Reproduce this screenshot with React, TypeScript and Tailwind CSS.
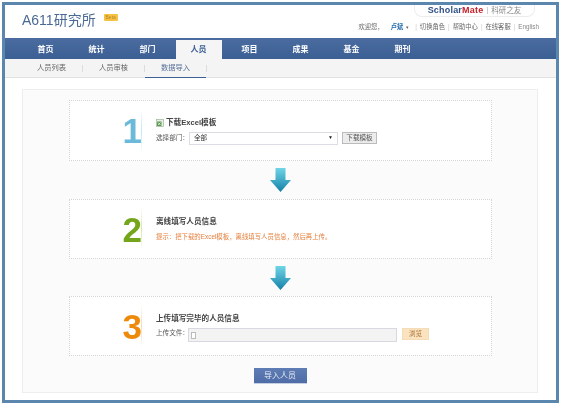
const cjk = "font-['Liberation_Sans','Noto_Sans_CJK_SC',sans-serif]";

const navItems = ['首页', '统计', '部门', '人员', '项目', '成果', '基金', '期刊'];
const subItems = ['人员列表', '人员审核', '数据导入'];

function Arrow({ id }: { id: string }) {
  return (
    <svg width="21" height="24" viewBox="0 0 21 24" className="block">
      <defs>
        <linearGradient id={id} x1="0" y1="0" x2="0" y2="1">
          <stop offset="0" stopColor="#6fd5e6" />
          <stop offset="1" stopColor="#1580a8" />
        </linearGradient>
      </defs>
      <path d="M5.5 0H15.5V12H21L10.5 24L0 12H5.5Z" fill={`url(#${id})`} />
    </svg>
  );
}

function ExcelIcon() {
  return (
    <svg width="8" height="8" viewBox="0 0 8 8" className="mr-[2px] shrink-0">
      <rect x="0.5" y="0.5" width="7" height="7" fill="#e8efe6" stroke="#9db59a" strokeWidth="0.7" />
      <rect x="1" y="2.5" width="4.5" height="4.5" fill="#5a9a4f" />
      <path d="M2 3.5L4.5 6M4.5 3.5L2 6" stroke="#fff" strokeWidth="0.7" />
    </svg>
  );
}

function Step({
  num,
  color,
  line,
  height,
  children,
}: {
  num: string;
  color: string;
  line: string;
  height: string;
  children: React.ReactNode;
}) {
  return (
    <div className={`flex items-center w-[423px] bg-white border border-dotted border-[#d4d4d4] ${height}`}>
      <div className="w-[72px] shrink-0 flex justify-end items-center">
        <span className={`font-['Liberation_Sans',sans-serif] font-bold text-[35px] leading-none -mr-[1px] ${color}`}>{num}</span>
        <div className={`w-px h-[44px] bg-gradient-to-b from-transparent to-transparent ${line}`} />
      </div>
      <div className="pl-[14px] flex-1">{children}</div>
    </div>
  );
}

export default function App() {
  return (
    <div className={`${cjk} w-[563px] h-[404px] bg-white pt-[2px] pl-[2px] overflow-hidden blur-[0.35px]`}>
      <div className="w-[557px] h-[401px] border-[3px] border-[#5b86ad] bg-white flex flex-col overflow-hidden">
        <header className="h-[33px] flex justify-between shrink-0">
          <div className="flex items-start pl-[17px] pt-[5px]">
            <span className="text-[14px] leading-[20px] text-[#4a6a95]">A611研究所</span>
            <span className="ml-[8px] mt-[4px] w-[14px] h-[7px] leading-[7px] text-center text-[5px] rounded-[1px] bg-[#f5c242] text-[#b98a2a]">Beta</span>
          </div>
          <div className="flex flex-col items-end pr-[17px]">
            <div className="mr-[4px] w-[121px] h-[12px] rounded-b-[8px] border-b border-x border-[#ececec] flex items-center justify-center leading-none">
              <span className="text-[9px] font-bold text-[#2f4f85] tracking-[0.2px]">Scholar</span>
              <span className="text-[9px] font-bold text-[#c8202a] tracking-[0.2px]">Mate</span>
              <span className="ml-[4px] pl-[3px] border-l border-[#ccc] text-[7.5px] text-[#8a8a8a]">科研之友</span>
            </div>
            <div className="mt-[6px] flex items-center text-[6.3px] leading-[8px] text-[#666] gap-[3px]">
              <span>欢迎您，</span>
              <span className="text-[#2a6fb0] ml-[4px] font-bold">卢斌</span>
              <span className="text-[5px]">▾</span>
              <span className="text-[#ccc] ml-[3px]">|</span>
              <span>切换角色</span>
              <span className="text-[#ccc]">|</span>
              <span>帮助中心</span>
              <span className="text-[#ccc]">|</span>
              <span>在线客服</span>
              <span className="text-[#ccc]">|</span>
              <span className="text-[#888]">English</span>
            </div>
          </div>
        </header>

        <nav className="h-[21px] shrink-0 bg-gradient-to-b from-[#4a6c9f] to-[#3c5f94] flex items-end pl-[15px]">
          {navItems.map((item) => (
            <div
              key={item}
              className={`h-[19px] flex items-center justify-center text-[8px] font-bold ${
                item === '人员' ? 'bg-[#f5f5f5] text-[#3c5f94] w-[46px] mx-[2.5px]' : 'text-white w-[51px]'
              }`}
            >
              {item}
            </div>
          ))}
        </nav>

        <div className="h-[19px] shrink-0 bg-[#f4f4f4] border-b border-[#e2e2e2] flex items-start pl-[16px]">
          {subItems.map((item, i) => (
            <div key={item} className="flex items-center h-[19px]">
              <div
                className={`w-[61px] h-[19px] flex items-center justify-center text-[7.3px] ${
                  i === 2 ? 'border-b border-[#3c5f94] text-[#5a7199]' : 'text-[#666]'
                }`}
              >
                {item}
              </div>
              <div className="w-px h-[7px] bg-[#dcdcdc]" />
            </div>
          ))}
        </div>

        <main className="flex-1 px-[17px] pt-[11px]">
          <div className="w-[516px] h-[304px] bg-[#fbfbfb] border border-[#eeeeee] flex flex-col items-center pt-[10px]">
            <div className="ml-[1px] flex flex-col items-center">
              <Step num="1" color="text-[#6cbad9]" line="via-[#bfe6f5]" height="h-[61px]">
                <div className="flex items-center text-[7.6px] font-bold text-[#444] leading-[12px] whitespace-nowrap">
                  <ExcelIcon />
                  下载Excel模板
                </div>
                <div className="mt-[3px] flex items-center text-[6.6px] text-[#555] whitespace-nowrap">
                  <span className="w-[33px]">选择部门：</span>
                  <div className="w-[149px] h-[13px] border border-[#dcdce6] bg-white flex items-center justify-between px-[4px]">
                    <span className="text-[#333]">全部</span>
                    <span className="text-[5px] text-[#222]">▼</span>
                  </div>
                  <button className="ml-[4px] w-[35px] h-[12px] border border-[#bbb] bg-[#ececec] text-[6.6px] text-[#555]">下载模板</button>
                </div>
              </Step>
              <div className="h-[38px] flex items-center">
                <Arrow id="arrow1" />
              </div>
              <Step num="2" color="text-[#74a51b]" line="via-[#d3ecA0]" height="h-[60px]">
                <div className="text-[7.6px] font-bold text-[#444] leading-[12px]">离线填写人员信息</div>
                <div className="mt-[4px] text-[6.4px] text-[#e4803f] leading-[10px] whitespace-nowrap">提示：把下载的Excel模板，离线填写人员信息，然后再上传。</div>
              </Step>
              <div className="h-[37px] flex items-center">
                <Arrow id="arrow2" />
              </div>
              <Step num="3" color="text-[#ee8a0b]" line="via-[#fad9ae]" height="h-[60px]">
                <div className="pt-[3px] text-[7.6px] font-bold text-[#444] leading-[12px] whitespace-nowrap">上传填写完毕的人员信息</div>
                <div className="mt-[3px] flex items-start text-[6.6px] leading-[10px] text-[#555] whitespace-nowrap">
                  <span className="w-[32px]">上传文件：</span>
                  <div className="w-[209px] h-[14px] border border-[#d8d8e2] bg-[#f3f3f3] flex items-center pl-[2px]">
                    <span className="w-[5px] h-[7px] bg-white border border-[#bbb]" />
                  </div>
                  <button className="ml-[5px] w-[27px] h-[12px] bg-[#fbe3c0] border border-[#f5dcb8] text-[6.6px] text-[#a8743a]">浏览</button>
                </div>
              </Step>
            </div>
            <button className="mt-[12px] w-[53px] h-[16px] bg-gradient-to-b from-[#5f7db5] to-[#4f6ca6] text-[#e6ebf5] text-[8px] border-b border-[#c5cfe2]">导入人员</button>
          </div>
        </main>
      </div>
    </div>
  );
}
